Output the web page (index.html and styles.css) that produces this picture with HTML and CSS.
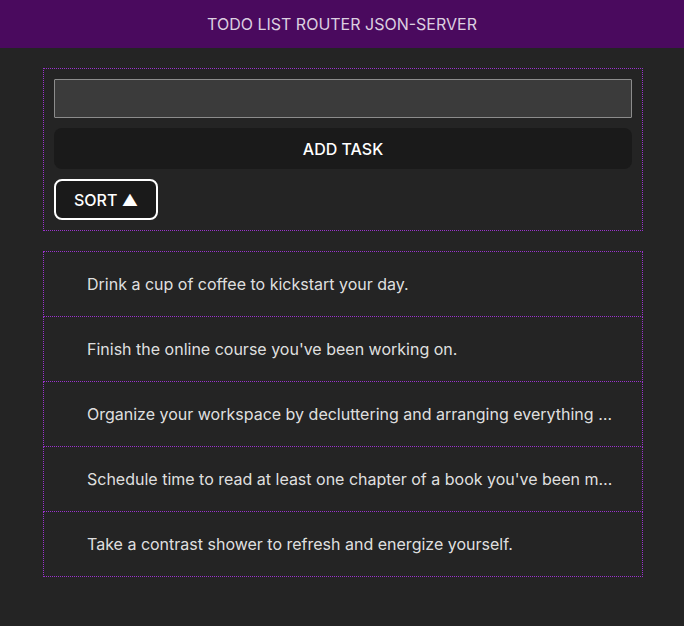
FILE: index.html
```html
<!DOCTYPE html>
<html lang="en">
<head>
<meta charset="utf-8">
<title>Todo List Router JSON-Server</title>
<link rel="stylesheet" href="styles.css">
</head>
<body>
<header class="app-header">
  <h1 class="app-title">TODO LIST ROUTER JSON-SERVER</h1>
</header>
<main class="app-main">
  <form class="task-form">
    <input class="task-input" type="text">
    <button class="btn btn-add" type="button">ADD TASK</button>
    <div class="sort-row">
      <button class="btn btn-sort" type="button">SORT ▲</button>
    </div>
  </form>
  <ul class="task-list">
    <li class="task-item">Drink a cup of coffee to kickstart your day.</li>
    <li class="task-item">Finish the online course you've been working on.</li>
    <li class="task-item">Organize your workspace by decluttering and arranging everything neatly on your desk.</li>
    <li class="task-item">Schedule time to read at least one chapter of a book you've been meaning to finish.</li>
    <li class="task-item">Take a contrast shower to refresh and energize yourself.</li>
  </ul>
</main>
</body>
</html>
```
FILE: styles.css
```css
* { box-sizing: border-box; }

html, body {
  margin: 0;
  padding: 0;
  background: #242424;
  color: rgba(255, 255, 255, 0.87);
  font-family: Inter, "Noto Sans", "Liberation Sans", sans-serif;
  font-size: 16px;
  line-height: 1.5;
}

.app-header {
  height: 48px;
  background: #4a0a5e;
  display: flex;
  align-items: center;
  justify-content: center;
}

.app-title {
  margin: 0;
  font-size: 16px;
  font-weight: 400;
  color: #dccfe0;
  line-height: 24px;
}

.app-main {
  width: 600px;
  margin: 20px auto 0;
  position: relative;
  left: 1px;
  display: flex;
  flex-direction: column;
  gap: 20px;
}

.task-form {
  margin: 0;
  border: 1px dotted #9932cc;
  padding: 10px;
  display: flex;
  flex-direction: column;
  gap: 10px;
}

.task-input {
  height: 39px;
  width: 100%;
  background: #3b3b3b;
  border: 1px solid #8c8c8c;
  border-radius: 1px;
  color: #fff;
  font: inherit;
  padding: 0 8px;
  outline: none;
}

.btn {
  font-family: Inter, "Noto Sans", "Liberation Sans", sans-serif;
  font-size: 16px;
  font-weight: 500;
  color: #fff;
  background: #1a1a1a;
  border-radius: 8px;
  cursor: pointer;
  line-height: 20px;
}

.btn-add {
  height: 41px;
  width: 100%;
  border: 1px solid transparent;
}

.sort-row {
  display: flex;
}

.btn-sort {
  height: 41px;
  width: 104px;
  border: 2px solid #fff;
  padding: 0;
  display: flex;
  align-items: center;
  justify-content: center;
  gap: 5px;
}

.task-list {
  list-style: none;
  margin: 0;
  padding: 0;
  border-top: 1px dotted #9932cc;
}

.task-item {
  border: 1px dotted #9932cc;
  border-top: none;
  padding: 20px 25px 20px 43px;
  line-height: 24px;
  white-space: nowrap;
  overflow: hidden;
  text-overflow: ellipsis;
}
```
